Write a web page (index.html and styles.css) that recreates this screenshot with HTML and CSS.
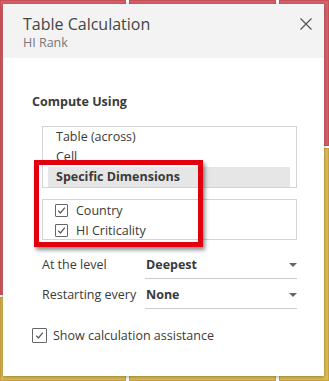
FILE: index.html
```html
<!DOCTYPE html>
<html lang="en">
<head>
    <meta charset="UTF-8">
    <title>Table Calculation</title>
    <link rel="stylesheet" href="styles.css">
</head>
<body>
    <!-- Viz cells behind the dialog -->
    <div class="viz">
        <div class="viz-col col-left">
            <div class="cell red"></div>
            <div class="cell yellow"></div>
        </div>
        <div class="viz-col col-mid">
            <div class="cell red"></div>
            <div class="cell yellow"></div>
        </div>
        <div class="viz-col col-right">
            <div class="cell red"></div>
            <div class="cell yellow"></div>
        </div>
    </div>

    <div class="dialog">
        <div class="dialog-header">
            <div class="titles">
                <div class="title">Table Calculation</div>
                <div class="subtitle">HI Rank</div>
            </div>
            <svg class="close" width="12" height="12" viewBox="0 0 12 12">
                <path d="M0.5 0.5 L11.5 11.5 M11.5 0.5 L0.5 11.5" stroke="#555" stroke-width="1.2" fill="none"/>
            </svg>
        </div>

        <div class="dialog-body">
            <div class="section-title">Compute Using</div>

            <div class="list-box">
                <div class="list-item">Table (across)</div>
                <div class="list-item">Cell</div>
                <div class="list-item selected">Specific Dimensions</div>
            </div>

            <div class="dims-box">
                <div class="check-row"><span class="checkbox"></span>Country</div>
                <div class="check-row"><span class="checkbox"></span>HI Criticality</div>
            </div>

            <div class="field-row">
                <div class="field-label">At the level</div>
                <div class="field-select">Deepest<span class="caret"></span></div>
            </div>
            <div class="field-row">
                <div class="field-label">Restarting every</div>
                <div class="field-select">None<span class="caret"></span></div>
            </div>

            <div class="check-row assist"><span class="checkbox"></span>Show calculation assistance</div>
        </div>

        <!-- red annotation box -->
        <div class="highlight"></div>
    </div>
</body>
</html>
```

FILE: styles.css
```css
body {
    margin: 0;
    width: 329px;
    height: 381px;
    overflow: hidden;
    background: #fff;
    font-family: 'Open Sans', 'Liberation Sans', sans-serif;
    color: #3a3a3a;
}

/* Viz behind */
.viz {
    display: grid;
    grid-template-columns: 126px 147px 1fr;
    column-gap: 3px;
    height: 381px;
}

.viz-col {
    display: flex;
    flex-direction: column;
    gap: 2px;
}

.cell {
    box-sizing: border-box;
}

.red {
    background: #d7626b;
    border: 1px solid #c94f58;
}

.yellow {
    background: #dcbd55;
    border: 1px solid #c7a33c;
    flex: 1;
}

.col-left .red { height: 295px; }
.col-mid .red { height: 200px; }
.col-right .red { height: 146px; }

/* Dialog */
.dialog {
    position: absolute;
    left: 3px;
    top: 4px;
    width: 321px;
    height: 372px;
    background: #fff;
    box-shadow: 0 1px 4px rgba(0, 0, 0, 0.35);
}

.dialog-header {
    height: 54px;
    background: #f3f3f3;
    display: flex;
    justify-content: space-between;
    align-items: flex-start;
    padding: 9px 12px 0 20px;
    box-sizing: border-box;
}

.title {
    font-size: 16px;
    line-height: 22px;
    color: #454545;
}

.subtitle {
    font-size: 12.5px;
    line-height: 15px;
    color: #777;
}

.close {
    margin-top: 5px;
}

.dialog-body {
    padding: 35px 27px 0 29px;
    font-size: 12.5px;
}

.section-title {
    font-weight: bold;
    line-height: 18px;
    margin-bottom: 15px;
}

.list-box {
    margin-left: 10px;
    border: 1px solid #d4d4d4;
    display: flex;
    flex-direction: column;
}

.list-item {
    height: 20px;
    line-height: 19px;
    padding-left: 13px;
}

.list-item.selected {
    margin: 0 6px 0 5px;
    padding-left: 8px;
    background: #e6e6e6;
    font-weight: bold;
}

.dims-box {
    margin: 11px 0 0 10px;
    border: 1px solid #d4d4d4;
    padding: 0 12px;
    height: 39px;
}

.check-row {
    display: flex;
    align-items: center;
    gap: 8px;
    height: 20px;
}

.checkbox {
    width: 13px;
    height: 13px;
    box-sizing: border-box;
    border: 1px solid #666;
    border-radius: 1px;
    background: #fff url("data:image/svg+xml,%3Csvg xmlns='http://www.w3.org/2000/svg' width='11' height='11' viewBox='0 0 11 11'%3E%3Cpath d='M2.2 5.6 L4.4 8 L8.8 2.6' stroke='%23555' stroke-width='1.2' fill='none'/%3E%3C/svg%3E") center no-repeat;
    flex: none;
}

.field-row {
    display: flex;
    align-items: flex-end;
    margin: 16px 0 0 10px;
}

.field-row + .field-row {
    margin-top: 7px;
}

.field-label {
    width: 103px;
    line-height: 18px;
    padding-bottom: 5px;
}

.field-select {
    flex: 1;
    display: flex;
    justify-content: space-between;
    align-items: center;
    border-bottom: 1px solid #ccc;
    font-weight: bold;
    line-height: 18px;
    padding: 0 0 4px 1px;
}

.caret {
    width: 0;
    height: 0;
    border-left: 4px solid transparent;
    border-right: 4px solid transparent;
    border-top: 4px solid #666;
}

.assist {
    margin-top: 16px;
    gap: 6px;
}

.assist .checkbox {
    width: 15px;
    height: 15px;
}

.highlight {
    position: absolute;
    left: 31px;
    top: 156px;
    width: 169px;
    height: 87px;
    box-sizing: border-box;
    border: 5px solid #e3000e;
    box-shadow: 2px 3px 4px rgba(0, 0, 0, 0.45);
}
```
